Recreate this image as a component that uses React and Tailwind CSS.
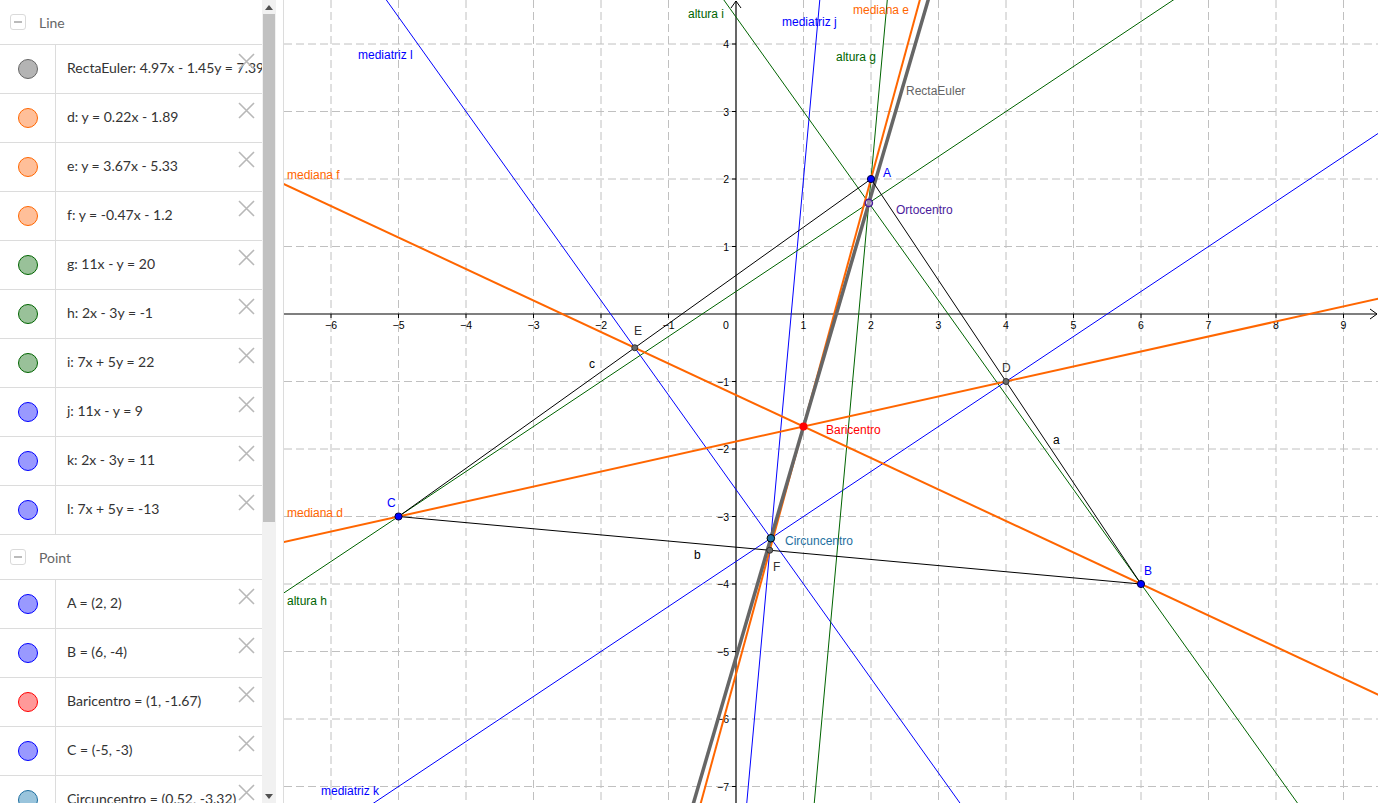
import React from "react";

const lineRows = [
  { text: "RectaEuler: 4.97x - 1.45y = 7.39", fill: "bg-[#b4b4b4]", ring: "border-[#666666]" },
  { text: "d: y = 0.22x - 1.89", fill: "bg-[#ffbf99]", ring: "border-[#ff6600]" },
  { text: "e: y = 3.67x - 5.33", fill: "bg-[#ffbf99]", ring: "border-[#ff6600]" },
  { text: "f: y = -0.47x - 1.2", fill: "bg-[#ffbf99]", ring: "border-[#ff6600]" },
  { text: "g: 11x - y = 20", fill: "bg-[#99c199]", ring: "border-[#006400]" },
  { text: "h: 2x - 3y = -1", fill: "bg-[#99c199]", ring: "border-[#006400]" },
  { text: "i: 7x + 5y = 22", fill: "bg-[#99c199]", ring: "border-[#006400]" },
  { text: "j: 11x - y = 9", fill: "bg-[#9999ff]", ring: "border-[#0000ff]" },
  { text: "k: 2x - 3y = 11", fill: "bg-[#9999ff]", ring: "border-[#0000ff]" },
  { text: "l: 7x + 5y = -13", fill: "bg-[#9999ff]", ring: "border-[#0000ff]" },
];

const pointRows = [
  { text: "A = (2, 2)", fill: "bg-[#9999ff]", ring: "border-[#0000ff]" },
  { text: "B = (6, -4)", fill: "bg-[#9999ff]", ring: "border-[#0000ff]" },
  { text: "Baricentro = (1, -1.67)", fill: "bg-[#ff9999]", ring: "border-[#ff0000]" },
  { text: "C = (-5, -3)", fill: "bg-[#9999ff]", ring: "border-[#0000ff]" },
  { text: "Circuncentro = (0.52, -3.32)", fill: "bg-[#99c4dc]", ring: "border-[#1e6fa0]" },
];

// world -> svg pixels (svg starts at page x 284)
const OX = 452;
const OY = 314;
const U = 67.5;
const px = (x) => OX + U * x;
const py = (y) => OY - U * y;

// a x + b y = c
function ends(a, b, c) {
  if (Math.abs(b) > Math.abs(a)) {
    return [[-8, (c + 8 * a) / b], [11, (c - 11 * a) / b]];
  }
  return [[(c + 9 * b) / a, -9], [(c - 6 * b) / a, 6]];
}

const A = [2, 2];
const B = [6, -4];
const C = [-5, -3];
const D = [4, -1];
const E = [-1.5, -0.5];
const F = [0.5, -3.5];
const H = [61 / 31, 51 / 31];
const O = [16 / 31, -103 / 31];
const G = [1, -5 / 3];

const lines = [
  { eq: [11, -1, 9], color: "#0000ff", w: 1 },
  { eq: [2, -3, 11], color: "#0000ff", w: 1 },
  { eq: [7, 5, -13], color: "#0000ff", w: 1 },
  { eq: [11, -1, 20], color: "#006400", w: 1 },
  { eq: [2, -3, -1], color: "#006400", w: 1 },
  { eq: [7, 5, 22], color: "#006400", w: 1 },
  { eq: [-2 / 9, 1, -17 / 9], color: "#ff6600", w: 2 },
  { eq: [-11 / 3, 1, -16 / 3], color: "#ff6600", w: 2 },
  { eq: [7 / 15, 1, -1.2], color: "#ff6600", w: 2 },
  { eq: [4.968, -1.452, 7.39], color: "#666666", w: 3.5 },
];

const labels = [
  { t: "mediana f", x: 287, y: 179, c: "#ff6600" },
  { t: "mediana d", x: 287, y: 517, c: "#ff6600" },
  { t: "altura h", x: 287, y: 605, c: "#006400" },
  { t: "mediatriz k", x: 321, y: 795, c: "#0000ff" },
  { t: "mediatriz l", x: 358, y: 59, c: "#0000ff" },
  { t: "altura i", x: 688, y: 18, c: "#006400" },
  { t: "mediatriz j", x: 782, y: 26, c: "#0000ff" },
  { t: "mediana e", x: 853, y: 14, c: "#ff6600" },
  { t: "altura g", x: 836, y: 61, c: "#006400" },
  { t: "RectaEuler", x: 906, y: 95, c: "#666666" },
  { t: "A", x: 883, y: 177, c: "#0000ff" },
  { t: "Ortocentro", x: 896, y: 214, c: "#4c1b9c" },
  { t: "Baricentro", x: 826, y: 434, c: "#ff0000" },
  { t: "Circuncentro", x: 785, y: 545, c: "#1e6fa0" },
  { t: "B", x: 1144, y: 575, c: "#0000ff" },
  { t: "C", x: 387, y: 507, c: "#0000ff" },
  { t: "D", x: 1002, y: 372, c: "#333333" },
  { t: "E", x: 634, y: 335, c: "#333333" },
  { t: "F", x: 773, y: 571, c: "#333333" },
  { t: "a", x: 1053, y: 444, c: "#000000" },
  { t: "b", x: 694, y: 559, c: "#000000" },
  { t: "c", x: 589, y: 368, c: "#000000" },
];

function Row({ row }) {
  return (
    <div className="flex h-[49px] border-t border-[#dcdcdc]">
      <div className="flex w-[56px] shrink-0 items-center justify-center border-r border-[#dcdcdc]">
        <span className={`size-[20px] rounded-full border ${row.fill} ${row.ring}`} />
      </div>
      <div className="relative flex flex-1 items-center pb-[3px] pl-[11px] whitespace-nowrap text-[14px] text-[#333]">
        {row.text}
        <svg className="absolute left-[182px] top-[8px]" width="17" height="17" viewBox="0 0 17 17">
          <path d="M1 1L16 16M16 1L1 16" stroke="#b8b8b8" strokeWidth="1.6" />
        </svg>
      </div>
    </div>
  );
}

function Graphics() {
  const gx = [];
  for (let i = -6; i <= 9; i++) gx.push(i);
  const gy = [];
  for (let i = -7; i <= 4; i++) gy.push(i);
  const seg = (p, q, k) => (
    <line key={k} x1={px(p[0])} y1={py(p[1])} x2={px(q[0])} y2={py(q[1])} stroke="#000" strokeWidth="1" />
  );
  return (
    <svg width="1094" height="803" className="block" style={{ fontFamily: '"Liberation Sans", Arial, sans-serif' }}>
      {gx.map((i) => i !== 0 && (
        <line key={"gx" + i} x1={px(i)} y1="0" x2={px(i)} y2="803" stroke="#c0c0c0" strokeDasharray="8 4" />
      ))}
      {gy.map((i) => i !== 0 && (
        <line key={"gy" + i} x1="0" y1={py(i)} x2="1094" y2={py(i)} stroke="#c0c0c0" strokeDasharray="8 4" />
      ))}
      <line x1="0" y1={OY} x2="1093" y2={OY} stroke="#000" strokeWidth="1.2" />
      <line x1={OX} y1="803" x2={OX} y2="1" stroke="#000" strokeWidth="1.2" />
      <path d={`M1086 ${OY - 5}L1093 ${OY}L1086 ${OY + 5}`} fill="none" stroke="#000" />
      <path d={`M${OX - 5} 8L${OX} 1L${OX + 5} 8`} fill="none" stroke="#000" />
      {gx.map((i) => i !== 0 && (
        <g key={"tx" + i}>
          <line x1={px(i)} y1={OY} x2={px(i)} y2={OY + 4} stroke="#000" />
          <text x={px(i)} y={OY + 15} fontSize="10.5" textAnchor="middle" fill="#000">{i < 0 ? "−" + -i : i}</text>
        </g>
      ))}
      {gy.map((i) => i !== 0 && (
        <g key={"ty" + i}>
          <line x1={OX - 4} y1={py(i)} x2={OX} y2={py(i)} stroke="#000" />
          <text x={OX - 7} y={py(i) + 4} fontSize="10.5" textAnchor="end" fill="#000">{i < 0 ? "−" + -i : i}</text>
        </g>
      ))}
      <text x={OX - 13} y={OY + 15} fontSize="10.5" fill="#000">0</text>
      {lines.map((l, k) => {
        const [p, q] = ends(...l.eq);
        return (
          <line key={"l" + k} x1={px(p[0])} y1={py(p[1])} x2={px(q[0])} y2={py(q[1])} stroke={l.color} strokeWidth={l.w} />
        );
      })}
      {seg(A, B, "a")}
      {seg(B, C, "b")}
      {seg(C, A, "c")}
      {[D, E, F].map((p, k) => (
        <circle key={"m" + k} cx={px(p[0])} cy={py(p[1])} r="3" fill="#6a6a6a" stroke="#333" strokeWidth="1" />
      ))}
      {[A, B, C].map((p, k) => (
        <circle key={"v" + k} cx={px(p[0])} cy={py(p[1])} r="3.6" fill="#0000ff" stroke="#000040" strokeWidth="1" />
      ))}
      <circle cx={px(H[0])} cy={py(H[1])} r="3.6" fill="#c9b3e6" fillOpacity="0.5" stroke="#4c1b9c" strokeWidth="1.5" />
      <circle cx={px(G[0])} cy={py(G[1])} r="4" fill="#ff0000" />
      <circle cx={px(O[0])} cy={py(O[1])} r="3.8" fill="#1e6fa0" stroke="#000" strokeWidth="1" />
      {labels.map((l) => (
        <text key={l.t} x={l.x - 284} y={l.y} fontSize="12" fill={l.c}>{l.t}</text>
      ))}
    </svg>
  );
}

export default function App() {
  return (
    <div className="flex h-[803px] w-[1378px] overflow-hidden bg-white" style={{ fontFamily: 'Lato, "Noto Sans", sans-serif' }}>
      <aside className="flex w-[276px] shrink-0">
        <div className="w-[262px] overflow-hidden">
          <div className="flex h-[44px] items-center gap-[13px] pl-[10px] text-[14px] text-[#666]">
            <span className="flex size-[16px] items-center justify-center rounded-[3px] border border-[#dadada]">
              <span className="h-[2px] w-[8px] bg-[#bbb]" />
            </span>
            Line
          </div>
          {lineRows.map((r) => <Row key={r.text} row={r} />)}
          <div className="flex h-[45px] items-center gap-[13px] border-t border-[#dcdcdc] pl-[10px] text-[14px] text-[#666]">
            <span className="flex size-[16px] items-center justify-center rounded-[3px] border border-[#dadada]">
              <span className="h-[2px] w-[8px] bg-[#bbb]" />
            </span>
            Point
          </div>
          {pointRows.map((r) => <Row key={r.text} row={r} />)}
        </div>
        <div className="flex w-[14px] flex-col bg-[#f1f1f1]">
          <div className="flex h-[14px] items-center justify-center">
            <span className="h-0 w-0 border-x-[4px] border-b-[5px] border-x-transparent border-b-[#505050]" />
          </div>
          <div className="mx-[1px] h-[508px] bg-[#c1c1c1]" />
          <div className="flex-1" />
          <div className="flex h-[14px] items-center justify-center">
            <span className="h-0 w-0 border-x-[4px] border-t-[5px] border-x-transparent border-t-[#505050]" />
          </div>
        </div>
      </aside>
      <div className="w-[8px] shrink-0 border-r border-[#dcdcdc]" />
      <main className="flex-1 overflow-hidden">
        <Graphics />
      </main>
    </div>
  );
}
